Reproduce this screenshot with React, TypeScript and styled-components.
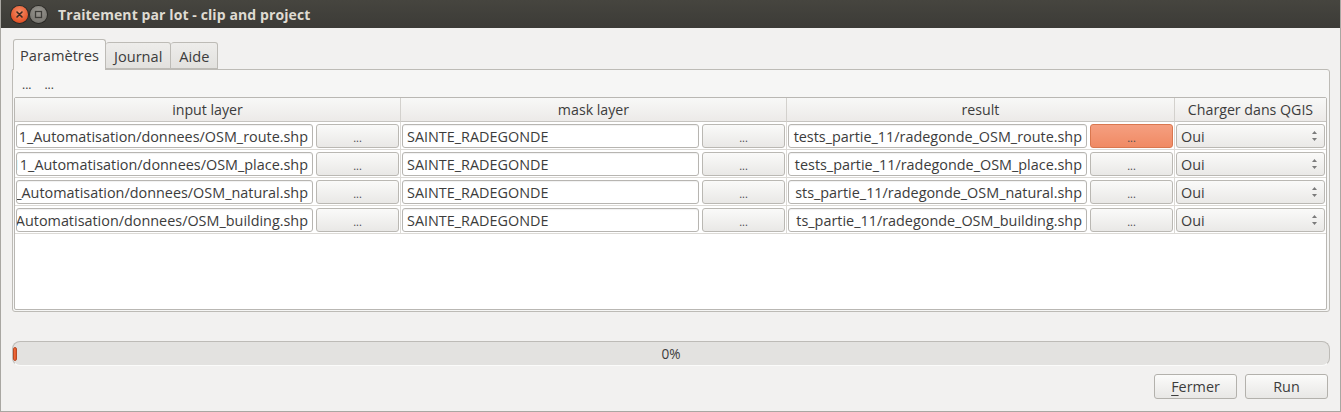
import React from "react";
import styled, { createGlobalStyle } from "styled-components";

const GlobalStyle = createGlobalStyle`
  html, body { margin: 0; padding: 0; background: #f2f1f0; }
  body { font-family: "Open Sans", "Noto Sans", "DejaVu Sans", sans-serif; font-size: 13px; color: #3c3c3c; }
  * { box-sizing: border-box; }
`;

const Window = styled.div`
  width: 1341px;
  height: 412px;
  display: flex;
  flex-direction: column;
  background: #f2f1f0;
  border-left: 1px solid #a9a7a2;
  border-right: 1px solid #a9a7a2;
  border-bottom: 1px solid #a9a7a2;
  overflow: hidden;
`;

const TitleBar = styled.div`
  height: 28px;
  flex: none;
  display: flex;
  align-items: center;
  background: linear-gradient(#46453f, #3c3b37);
  padding-left: 10px;
  gap: 2px;
`;

const CircleBtn = styled.div<{ $kind: "close" | "max" }>`
  width: 17px;
  height: 17px;
  border-radius: 50%;
  display: flex;
  align-items: center;
  justify-content: center;
  background: ${(p) =>
    p.$kind === "close"
      ? "radial-gradient(circle at 50% 35%, #f6906a, #e4552a 70%, #c9431c)"
      : "radial-gradient(circle at 50% 35%, #9a9892, #7b7973 70%, #66645f)"};
  box-shadow: 0 0 0 1px rgba(0,0,0,0.35);
`;

const TitleText = styled.div`
  margin-left: 9px;
  color: #dfdbd2;
  font-family: "Open Sans", "Noto Sans", sans-serif;
  font-weight: 700;
  font-size: 14px;
  letter-spacing: 0.1px;
`;

const Body = styled.div`
  flex: 1;
  display: flex;
  flex-direction: column;
  padding: 11px 11px 0 11px;
`;

const TabBar = styled.div`
  display: flex;
  align-items: flex-end;
  height: 30px;
  padding-left: 1px;
`;

const Tab = styled.div<{ $active?: boolean }>`
  height: ${(p) => (p.$active ? "31px" : "27px")};
  margin-bottom: ${(p) => (p.$active ? "-1px" : "0")};
  padding: 0 ${(p) => (p.$active ? "6px" : "8px")};
  display: flex;
  align-items: center;
  border: 1px solid #bdbbb6;
  border-bottom: ${(p) => (p.$active ? "none" : "1px solid #bdbbb6")};
  border-left: ${(p) => (p.$active ? "1px solid #bdbbb6" : "none")};
  border-radius: 3px 3px 0 0;
  background: ${(p) => (p.$active ? "#f7f7f6" : "linear-gradient(#eeedeb, #e2e1de)")};
  font-size: 14.6px;
  color: #3c3c3c;
  position: relative;
  z-index: ${(p) => (p.$active ? 1 : 0)};
  &:first-child { border-left: 1px solid #bdbbb6; }
`;

const Pane = styled.div`
  height: 243px;
  border: 1px solid #bdbbb6;
  border-radius: 0 3px 3px 3px;
  background: #f6f6f5;
  display: flex;
  flex-direction: column;
  padding: 0 2px 1px 1px;
  width: 1318px;
`;

const ToolRow = styled.div`
  height: 27px;
  display: flex;
  align-items: center;
  gap: 13px;
  padding-left: 8px;
  padding-top: 1px;
`;

const ToolBtn = styled.span`
  font-size: 12px;
  color: #3c3c3c;
`;

const Table = styled.div`
  flex: 1;
  border: 1px solid #b9b7b3;
  background: #ffffff;
  display: grid;
  grid-template-columns: 386px 386px 388px 1fr;
  grid-auto-rows: 28px;
  grid-template-rows: 24px;
  align-content: start;
  border-radius: 2px;
`;

const HeadCell = styled.div<{ $last?: boolean }>`
  display: flex;
  align-items: center;
  justify-content: center;
  background: linear-gradient(#f8f8f7, #eceae8);
  border-bottom: 1px solid #c6c4c0;
  border-right: ${(p) => (p.$last ? "none" : "1px solid #d3d1cd")};
  color: #3c3c3c;
  font-size: 14.2px;
`;

const Cell = styled.div<{ $last?: boolean }>`
  display: flex;
  align-items: center;
  gap: 3px;
  padding: 1px 1px 0 1px;
  border-bottom: 1px solid #dcdad6;
  border-right: ${(p) => (p.$last ? "none" : "1px solid #dcdad6")};
`;

const LineEdit = styled.div<{ $align?: "left" | "right" }>`
  flex: 1;
  min-width: 0;
  height: 24px;
  border: 1px solid #b7b5b1;
  border-radius: 3px;
  background: #fff;
  box-shadow: inset 0 1px 1px rgba(0,0,0,0.06);
  display: flex;
  align-items: center;
  justify-content: ${(p) => (p.$align === "left" ? "flex-start" : "flex-end")};
  overflow: hidden;
  padding: ${(p) => (p.$align === "left" ? "0 0 0 4px" : "0 4px 0 0")};
  white-space: nowrap;
  font-size: 14.4px;
  color: #3c3c3c;
`;

const DotBtn = styled.div<{ $hot?: boolean }>`
  width: 83px;
  flex: none;
  height: 24px;
  border-radius: 3px;
  border: 1px solid ${(p) => (p.$hot ? "#d9774f" : "#bab8b3")};
  background: ${(p) =>
    p.$hot ? "linear-gradient(#f59f80, #f08a64)" : "linear-gradient(#fafaf9, #e9e8e6)"};
  display: flex;
  align-items: center;
  justify-content: center;
  font-size: 11px;
  line-height: 1;
  color: #4a4a4a;
  padding-top: 3px;
`;

const Combo = styled.div`
  flex: 1;
  height: 24px;
  border: 1px solid #bab8b3;
  border-radius: 3px;
  background: linear-gradient(#fafaf9, #eae9e7);
  display: flex;
  align-items: center;
  justify-content: space-between;
  padding: 0 6px 0 4px;
  font-size: 14.4px;
  color: #3c3c3c;
`;

const Arrows = styled.svg`
  width: 7px;
  height: 12px;
`;

const Progress = styled.div`
  margin-top: 29px;
  height: 25px;
  width: 1318px;
  border: 1px solid #bdbbb7;
  border-bottom-color: #fbfbfa;
  border-radius: 8px;
  background: #e3e2e0;
  display: flex;
  align-items: center;
  position: relative;
  font-size: 13.6px;
  color: #3c3c3c;
`;

const Chunk = styled.div`
  position: absolute;
  left: 0;
  top: 5px;
  width: 4px;
  height: 14px;
  border-radius: 2px;
  background: linear-gradient(90deg, #f0703f, #e2552a);
  border: 1px solid #b94a24;
`;

const ProgressLabel = styled.div`
  flex: 1;
  text-align: center;
`;

const Footer = styled.div`
  margin-top: 8px;
  display: flex;
  justify-content: flex-end;
  gap: 8px;
  width: 1316px;
`;

const DialogBtn = styled.div`
  width: 83px;
  height: 25px;
  border: 1px solid #b3b1ac;
  border-radius: 3px;
  background: linear-gradient(#fbfbfa, #e8e7e5);
  display: flex;
  align-items: center;
  justify-content: center;
  font-size: 14.4px;
  color: #3c3c3c;
  u { text-decoration: underline; text-underline-offset: 3px; }
`;

const rows = [
  { input: "11_Automatisation/donnees/OSM_route.shp", out: "tests_partie_11/radegonde_OSM_route.shp", hot: true },
  { input: "_11_Automatisation/donnees/OSM_place.shp", out: "tests_partie_11/radegonde_OSM_place.shp" },
  { input: "11_Automatisation/donnees/OSM_natural.shp", out: "sts_partie_11/radegonde_OSM_natural.shp" },
  { input: "1_Automatisation/donnees/OSM_building.shp", out: "ts_partie_11/radegonde_OSM_building.shp" },
];

const SpinArrows = () => (
  <Arrows viewBox="0 0 7 12">
    <path d="M3.5 1 L6 4 L1 4 Z" fill="#7a7a7a" />
    <path d="M3.5 11 L6 8 L1 8 Z" fill="#7a7a7a" />
  </Arrows>
);

export default function App() {
  return (
    <>
      <GlobalStyle />
      <Window>
        <TitleBar>
          <CircleBtn $kind="close">
            <svg width="9" height="9" viewBox="0 0 9 9">
              <path d="M2 2 L7 7 M7 2 L2 7" stroke="#3a2a22" strokeWidth="1.6" strokeLinecap="round" />
            </svg>
          </CircleBtn>
          <CircleBtn $kind="max">
            <svg width="9" height="9" viewBox="0 0 9 9">
              <rect x="1.5" y="1.5" width="6" height="6" fill="none" stroke="#3c3b37" strokeWidth="1.3" />
            </svg>
          </CircleBtn>
          <TitleText>Traitement par lot - clip and project</TitleText>
        </TitleBar>
        <Body>
          <TabBar>
            <Tab $active>Paramètres</Tab>
            <Tab>Journal</Tab>
            <Tab>Aide</Tab>
          </TabBar>
          <Pane>
            <ToolRow>
              <ToolBtn>...</ToolBtn>
              <ToolBtn>...</ToolBtn>
            </ToolRow>
            <Table>
              <HeadCell>input layer</HeadCell>
              <HeadCell>mask layer</HeadCell>
              <HeadCell>result</HeadCell>
              <HeadCell $last>Charger dans QGIS</HeadCell>
              {rows.map((r, i) => (
                <React.Fragment key={i}>
                  <Cell>
                    <LineEdit>{r.input}</LineEdit>
                    <DotBtn>...</DotBtn>
                  </Cell>
                  <Cell>
                    <LineEdit $align="left">SAINTE_RADEGONDE</LineEdit>
                    <DotBtn>...</DotBtn>
                  </Cell>
                  <Cell>
                    <LineEdit>{r.out}</LineEdit>
                    <DotBtn $hot={r.hot}>...</DotBtn>
                  </Cell>
                  <Cell $last>
                    <Combo>
                      <span>Oui</span>
                      <SpinArrows />
                    </Combo>
                  </Cell>
                </React.Fragment>
              ))}
            </Table>
          </Pane>
          <Progress>
            <Chunk />
            <ProgressLabel>0%</ProgressLabel>
          </Progress>
          <Footer>
            <DialogBtn>
              <span><u>F</u>ermer</span>
            </DialogBtn>
            <DialogBtn>Run</DialogBtn>
          </Footer>
        </Body>
      </Window>
    </>
  );
}
